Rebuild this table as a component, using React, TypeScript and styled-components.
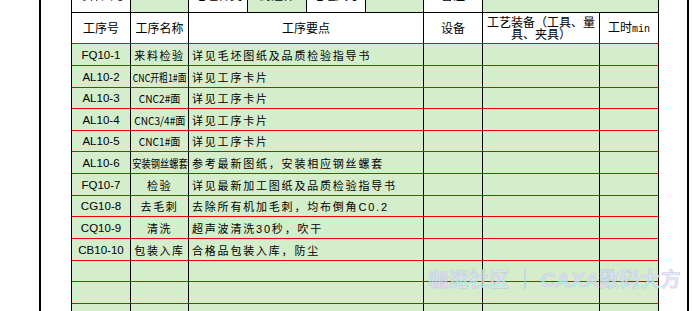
import React from "react";
import styled, { createGlobalStyle } from "styled-components";

const GlobalStyle = createGlobalStyle`
  html, body { margin: 0; padding: 0; background: #ffffff; }
  body { font-family: "Noto Sans CJK SC", "Liberation Sans", sans-serif; color: #000; }
`;

const GREEN = "#d4edcb";
const RED = "#ee0000";

const Page = styled.div`
  position: relative;
  width: 692px;
  height: 311px;
  overflow: hidden;
  display: flex;
  align-items: flex-start;
  background: #ffffff;
`;

const Rule = styled.div<{ $gap: number }>`
  flex: none;
  width: 2px;
  height: 311px;
  margin-left: ${(p) => p.$gap}px;
  background: #000;
`;

const Sheet = styled.div`
  flex: none;
  width: 588px;
  margin-left: 30px;
  margin-top: -20px;
  border-left: 1px solid #000;
  box-sizing: border-box;
  display: flex;
  flex-direction: column;
`;

const Row = styled.div<{ $cols: string; $h: number }>`
  display: grid;
  grid-template-columns: ${(p) => p.$cols};
  height: ${(p) => p.$h}px;
`;

const Cell = styled.div<{ $bg: "white" | "green"; $line: "black" | "red"; $align?: "left" | "center" }>`
  box-sizing: border-box;
  display: flex;
  align-items: center;
  justify-content: ${(p) => (p.$align === "left" ? "flex-start" : "center")};
  padding-left: ${(p) => (p.$align === "left" ? "3px" : "0")};
  background: ${(p) => (p.$bg === "green" ? GREEN : "#ffffff")};
  border-right: 1px solid #000;
  border-bottom: 1px solid ${(p) => (p.$line === "red" ? RED : "#000")};
  overflow: hidden;
  white-space: nowrap;
`;

const HeadText = styled.span`
  font-family: "Noto Sans CJK SC", sans-serif;
  font-size: 12px;
  line-height: 12px;
  text-align: center;
  white-space: normal;
`;

const Unit = styled.span`
  font-family: "Liberation Mono", monospace;
  font-size: 10px;
`;

const TopText = styled.span`
  font-family: "Liberation Sans", "Noto Sans CJK SC", sans-serif;
  font-size: 12px;
  line-height: 12px;
`;

const Code = styled.span`
  font-family: "Liberation Sans", sans-serif;
  font-size: 11.5px;
`;

const Name = styled.span<{ $scale: number }>`
  display: inline-block;
  font-family: "Noto Sans CJK SC", sans-serif;
  font-size: 11px;
  letter-spacing: ${(p) => (p.$scale < 1 ? "0px" : "1.6px")};
  transform: scaleX(${(p) => p.$scale});
  transform-origin: center;
`;

const Point = styled.span`
  font-family: "Liberation Sans", "Noto Sans CJK SC", sans-serif;
  font-size: 11px;
  letter-spacing: 1.8px;
`;

const Watermark = styled.div`
  position: absolute;
  left: 428px;
  top: 264px;
  font-family: "Noto Sans CJK SC", sans-serif;
  font-size: 20px;
  font-weight: 700;
  white-space: nowrap;
  color: rgba(220, 223, 246, 0.75);
  -webkit-text-stroke: 0.7px rgba(180, 186, 230, 0.55);
  letter-spacing: 0.5px;
`;

const Latin = styled.span`
  font-family: "Liberation Sans", sans-serif;
  font-style: italic;
`;

const TOP_COLS = "59px 58px 59px 59px 59px 58px 59px 176px";
const MAIN_COLS = "59px 58px 235px 59px 117px 59px";

const topCells: { text: string; bg: "white" | "green" }[] = [
  { text: "零件图号", bg: "white" },
  { text: "ZL1001-01", bg: "green" },
  { text: "毛坯种类", bg: "white" },
  { text: "铸造件", bg: "green" },
  { text: "毛坯尺寸", bg: "white" },
  { text: "", bg: "green" },
  { text: "备注", bg: "white" },
  { text: "", bg: "green" },
];

type Step = { code: string; name: string; scale: number; point: string };

const steps: Step[] = [
  { code: "FQ10-1", name: "来料检验", scale: 1, point: "详见毛坯图纸及品质检验指导书" },
  { code: "AL10-2", name: "CNC开粗1#面", scale: 0.8, point: "详见工序卡片" },
  { code: "AL10-3", name: "CNC2#面", scale: 0.92, point: "详见工序卡片" },
  { code: "AL10-4", name: "CNC3/4#面", scale: 0.92, point: "详见工序卡片" },
  { code: "AL10-5", name: "CNC1#面", scale: 0.92, point: "详见工序卡片" },
  { code: "AL10-6", name: "安装钢丝螺套", scale: 0.84, point: "参考最新图纸，安装相应钢丝螺套" },
  { code: "FQ10-7", name: "检验", scale: 1, point: "详见最新加工图纸及品质检验指导书" },
  { code: "CG10-8", name: "去毛刺", scale: 1, point: "去除所有机加毛刺，均布倒角C0.2" },
  { code: "CQ10-9", name: "清洗", scale: 1, point: "超声波清洗30秒，吹干" },
  { code: "CB10-10", name: "包装入库", scale: 1, point: "合格品包装入库，防尘" },
  { code: "", name: "", scale: 1, point: "" },
  { code: "", name: "", scale: 1, point: "" },
  { code: "", name: "", scale: 1, point: "" },
];

const heights = [22, 22, 21, 22, 21, 22, 22, 21, 22, 22, 21, 22, 22];

export default function App() {
  return (
    <>
      <GlobalStyle />
      <Page>
        <Rule $gap={39} />
        <Sheet>
          <Row $cols={TOP_COLS} $h={33}>
            {topCells.map((c, i) => (
              <Cell key={i} $bg={c.bg} $line="black">
                <TopText>{c.text}</TopText>
              </Cell>
            ))}
          </Row>
          <Row $cols={MAIN_COLS} $h={31}>
            <Cell $bg="white" $line="red"><HeadText>工序号</HeadText></Cell>
            <Cell $bg="white" $line="red"><HeadText>工序名称</HeadText></Cell>
            <Cell $bg="white" $line="red"><HeadText>工序要点</HeadText></Cell>
            <Cell $bg="white" $line="red"><HeadText>设备</HeadText></Cell>
            <Cell $bg="white" $line="red"><HeadText>工艺装备（工具、量具、夹具）</HeadText></Cell>
            <Cell $bg="white" $line="red"><HeadText>工时<Unit>min</Unit></HeadText></Cell>
          </Row>
          {steps.map((s, i) => (
            <Row key={i} $cols={MAIN_COLS} $h={heights[i]}>
              <Cell $bg="green" $line="red"><Code>{s.code}</Code></Cell>
              <Cell $bg="green" $line="red"><Name $scale={s.scale}>{s.name}</Name></Cell>
              <Cell $bg="green" $line="red" $align="left"><Point>{s.point}</Point></Cell>
              <Cell $bg="green" $line="red" />
              <Cell $bg="green" $line="red" />
              <Cell $bg="green" $line="red" />
            </Row>
          ))}
        </Sheet>
        <Rule $gap={28} />
        <Watermark>
          咖迷社区 ｜ <Latin>CAXA</Latin>数码大方
        </Watermark>
      </Page>
    </>
  );
}
